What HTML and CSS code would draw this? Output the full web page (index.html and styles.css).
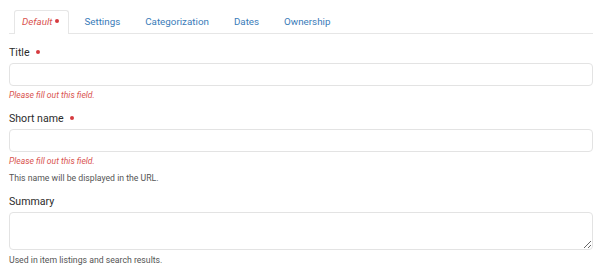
FILE: index.html
```html
<!DOCTYPE html>
<html lang="en">
<head>
    <meta charset="UTF-8">
    <title>Edit item</title>
    <link rel="stylesheet" href="styles.css">
</head>
<body>
    <ul class="tabs">
        <li class="tab active">Default<span class="req"></span></li>
        <li class="tab">Settings</li>
        <li class="tab">Categorization</li>
        <li class="tab">Dates</li>
        <li class="tab">Ownership</li>
    </ul>

    <div class="field">
        <label class="label">Title<span class="req"></span></label>
        <input class="input" type="text">
        <div class="error">Please fill out this field.</div>
    </div>

    <div class="field">
        <label class="label">Short name<span class="req"></span></label>
        <input class="input" type="text">
        <div class="error">Please fill out this field.</div>
        <div class="help">This name will be displayed in the URL.</div>
    </div>

    <div class="field">
        <label class="label">Summary</label>
        <textarea class="input textarea"></textarea>
        <div class="help">Used in item listings and search results.</div>
    </div>
</body>
</html>
```

FILE: styles.css
```css
body {
    font-family: Roboto, "Noto Sans", sans-serif;
    margin: 0;
    padding: 0 7px 0 9px;
    background: #fff;
    color: #333;
}

.tabs {
    display: flex;
    list-style: none;
    margin: 10px 0 0 0;
    padding: 0 0 0 5px;
    border-bottom: 1px solid #e6e6e6;
}
.tab {
    font-size: 9.8px;
    color: #3a7cb9;
    padding: 4px 9px 6px 7px;
    margin-right: 7px;
    border: 1px solid transparent;
    border-bottom: none;
    border-radius: 3px 3px 0 0;
    margin-bottom: -1px;
    line-height: 13px;
}
.tab.active {
    color: #d9534f;
    font-style: italic;
    background: #fff;
    border-color: #e6e6e6;
}
.req {
    display: inline-block;
    width: 4px;
    height: 4px;
    border-radius: 50%;
    background: #d63a3f;
    margin-left: 3px;
    vertical-align: 2px;
}
.label .req {
    margin-left: 6px;
}

.field {
    margin-top: 11px;
}
.field:first-of-type {
    margin-top: 12px;
}
.label {
    display: block;
    font-size: 10.6px;
    font-weight: 400;
    color: #2b2b2b;
    line-height: 14px;
    margin-bottom: 3px;
}
.input {
    display: block;
    box-sizing: border-box;
    width: 100%;
    height: 23px;
    border: 1px solid #e3e3e3;
    border-radius: 4px;
    margin: 0;
}
.textarea {
    height: 38px;
    resize: vertical;
}
.error {
    font-size: 8.6px;
    font-style: italic;
    color: #d9534f;
    line-height: 12px;
    margin-top: 3px;
}
.help {
    font-size: 8.7px;
    color: #555;
    line-height: 12px;
    margin-top: 5px;
}
.textarea + .help {
    margin-top: 4px;
}
```
